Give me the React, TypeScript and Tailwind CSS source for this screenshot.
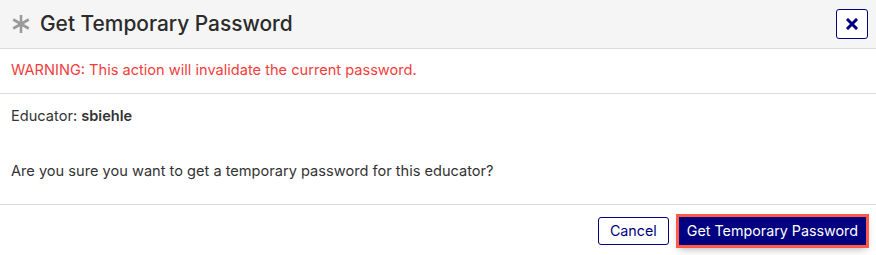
export default function App() {
  return (
    <div className="w-[876px] h-[255px] bg-white font-['Inter','Liberation_Sans',sans-serif] text-[#333] overflow-hidden">
      <div className="h-[49px] bg-[#f5f5f5] border-b border-[#dcdcdc] flex items-center pl-[11px] pr-[8px]">
        <svg viewBox="0 0 20 20" className="w-[20px] h-[20px] text-[#9a9a9a]" fill="none" stroke="currentColor" strokeWidth="2.6" strokeLinecap="butt">
          <path d="M10 1v18M2.2 5.5l15.6 9M2.2 14.5l15.6-9" />
        </svg>
        <h1 className="ml-[9px] text-[20.9px] leading-[24px] font-medium text-[#2b2b2b]">Get Temporary Password</h1>
        <button className="ml-auto w-[32px] h-[30px] border border-[#000080] rounded-[3px] flex items-center justify-center bg-white">
          <svg viewBox="0 0 12 12" className="w-[12px] h-[12px]" stroke="#000080" strokeWidth="3" strokeLinecap="square">
            <path d="M2 2l8 8M10 2l-8 8" />
          </svg>
        </button>
      </div>
      <div className="h-[45px] border-b border-[#dcdcdc] flex items-center px-[11px]">
        <p className="text-[14.6px] text-[#f23d3d]">WARNING: This action will invalidate the current password.</p>
      </div>
      <div className="h-[111px] border-b border-[#dcdcdc] px-[11px] pt-[12px] text-[14.6px] leading-[20px]">
        <p>Educator: <span className="font-semibold">sbiehle</span></p>
        <p className="mt-[35px]">Are you sure you want to get a temporary password for this educator?</p>
      </div>
      <div className="flex items-center justify-end gap-[10px] pr-[10px] pt-[12px]">
        <button className="h-[28px] px-[11px] border border-[#000080] rounded-[3px] text-[14.3px] text-[#000080] bg-white">Cancel</button>
        <button className="h-[28px] px-[8px] bg-[#000080] text-white text-[14.3px] outline-[3px] outline-solid outline-[#ff5a4a] shadow-[0_4px_8px_rgba(0,0,0,0.3)]">Get Temporary Password</button>
      </div>
    </div>
  );
}
